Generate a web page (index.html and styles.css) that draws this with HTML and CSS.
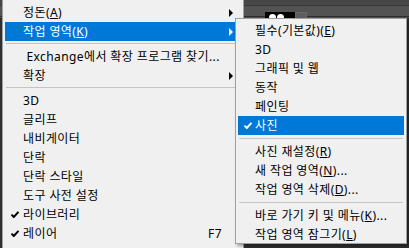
FILE: index.html
```html
<!DOCTYPE html>
<html lang="ko">
<head>
    <meta charset="UTF-8">
    <meta name="viewport" content="width=device-width, initial-scale=1.0">
    <title>창 - 작업 영역</title>
    <link rel="stylesheet" href="styles.css">
</head>
<body>
    <div class="thumb">
        <span class="dot"></span>
        <span class="dot dot-2"></span>
    </div>
    <div class="thumb-box"></div>

    <div class="menu main-menu">
        <div class="item"><span class="check"></span><span class="label">정돈(<u>A</u>)</span><span class="key"></span><span class="arrow"></span></div>
        <div class="item active"><span class="check"></span><span class="label">작업 영역(<u>K</u>)</span><span class="key"></span><span class="arrow"></span></div>
        <div class="sep"></div>
        <div class="item"><span class="check"></span><span class="label">&nbsp;Exchange에서 확장 프로그램 찾기...</span><span class="key"></span><span></span></div>
        <div class="item"><span class="check"></span><span class="label">확장</span><span class="key"></span><span class="arrow"></span></div>
        <div class="sep"></div>
        <div class="item"><span class="check"></span><span class="label">3D</span><span class="key"></span><span></span></div>
        <div class="item"><span class="check"></span><span class="label">글리프</span><span class="key"></span><span></span></div>
        <div class="item"><span class="check"></span><span class="label">내비게이터</span><span class="key"></span><span></span></div>
        <div class="item"><span class="check"></span><span class="label">단락</span><span class="key"></span><span></span></div>
        <div class="item"><span class="check"></span><span class="label">단락 스타일</span><span class="key"></span><span></span></div>
        <div class="item"><span class="check"></span><span class="label">도구 사전 설정</span><span class="key"></span><span></span></div>
        <div class="item checked"><span class="check"><svg viewBox="0 0 8 7"><path d="M0.5 3.6 L2.8 6 L7.5 0.8" /></svg></span><span class="label">라이브러리</span><span class="key"></span><span></span></div>
        <div class="item checked"><span class="check"><svg viewBox="0 0 8 7"><path d="M0.5 3.6 L2.8 6 L7.5 0.8" /></svg></span><span class="label">레이어</span><span class="key">F7</span><span></span></div>
    </div>

    <div class="menu sub-menu">
        <div class="item"><span class="check"></span><span class="label">필수(기본값)(<u>E</u>)</span></div>
        <div class="item"><span class="check"></span><span class="label">3D</span></div>
        <div class="item"><span class="check"></span><span class="label">그래픽 및 웹</span></div>
        <div class="item"><span class="check"></span><span class="label">동작</span></div>
        <div class="item"><span class="check"></span><span class="label">페인팅</span></div>
        <div class="item active checked"><span class="check"><svg viewBox="0 0 8 7"><path d="M0.5 3.6 L2.8 6 L7.5 0.8" /></svg></span><span class="label">사진</span></div>
        <div class="sep"></div>
        <div class="item"><span class="check"></span><span class="label">사진 재설정(<u>R</u>)</span></div>
        <div class="item"><span class="check"></span><span class="label">새 작업 영역(<u>N</u>)...</span></div>
        <div class="item"><span class="check"></span><span class="label">작업 영역 삭제(<u>D</u>)...</span></div>
        <div class="sep"></div>
        <div class="item"><span class="check"></span><span class="label">바로 가기 키 및 메뉴(<u>K</u>)...</span></div>
        <div class="item"><span class="check"></span><span class="label">작업 영역 잠그기(<u>L</u>)</span></div>
    </div>
</body>
</html>
```

FILE: styles.css
```css
* {
    margin: 0;
    padding: 0;
    box-sizing: border-box;
}

body {
    width: 409px;
    height: 248px;
    overflow: hidden;
    position: relative;
    font-family: "Noto Sans", "Noto Sans CJK KR", sans-serif;
    font-size: 12px;
    letter-spacing: 0.4px;
    color: #000;
    background:
        linear-gradient(#474747 0 5px, #383838 5px 6px, #535353 6px 16px, #2e2e2e 16px 17px, #535353 17px) top / 100% 18px no-repeat,
        #2f2f2f;
}

/* layer thumbnail peeking out above the submenu */
.thumb {
    position: absolute;
    left: 265px;
    top: 12px;
    width: 30px;
    height: 10px;
    background: #000;
}

.dot {
    position: absolute;
    left: 4px;
    top: 2px;
    width: 7px;
    height: 7px;
    border-radius: 50%;
    background: #fff;
}

.dot-2 {
    left: 12px;
}

.thumb-box {
    position: absolute;
    left: 295px;
    top: 12px;
    width: 12px;
    height: 10px;
    background: #5e5e5e;
    border: 1px solid #6a6a6a;
}

.menu {
    background: #f0f0f0;
    border: 1px solid #a0a0a0;
    padding: 2px;
    line-height: 19px;
}

.main-menu {
    width: 242px;
    height: 260px;
    margin-left: 2px;
    margin-top: -1px;
    padding-top: 3px;
}

.main-menu .sep {
    height: 6px;
    padding: 2px 1px 3px;
}

.sub-menu {
    position: absolute;
    left: 235px;
    top: 18px;
    width: 172px;
    height: 226px;
    box-shadow: 2px 2px 3px rgba(0, 0, 0, 0.35);
}

.item {
    display: grid;
    grid-template-columns: 18px 1fr auto 16px;
    align-items: center;
    height: 19px;
    white-space: nowrap;
}

.sub-menu .item {
    grid-template-columns: 17px 1fr;
}

.item.active {
    background: #0078d7;
    color: #fff;
}

.item u {
    text-decoration: underline;
    text-underline-offset: 1px;
}

.check {
    display: flex;
    justify-content: center;
    padding-left: 2px;
}

.check svg {
    width: 8px;
    height: 7px;
    fill: none;
    stroke: #000;
    stroke-width: 2;
}

.item.active .check svg {
    stroke: #fff;
}

.key {
    padding-right: 3px;
}

.arrow {
    width: 0;
    height: 0;
    margin-left: 4px;
    border-top: 4px solid transparent;
    border-bottom: 4px solid transparent;
    border-left: 4px solid #000;
}

.item.active .arrow {
    border-left-color: #fff;
}

.sep {
    height: 7px;
    padding: 3px 1px;
}

.sep::before {
    content: "";
    display: block;
    height: 1px;
    background: #c4c4c4;
}
```
